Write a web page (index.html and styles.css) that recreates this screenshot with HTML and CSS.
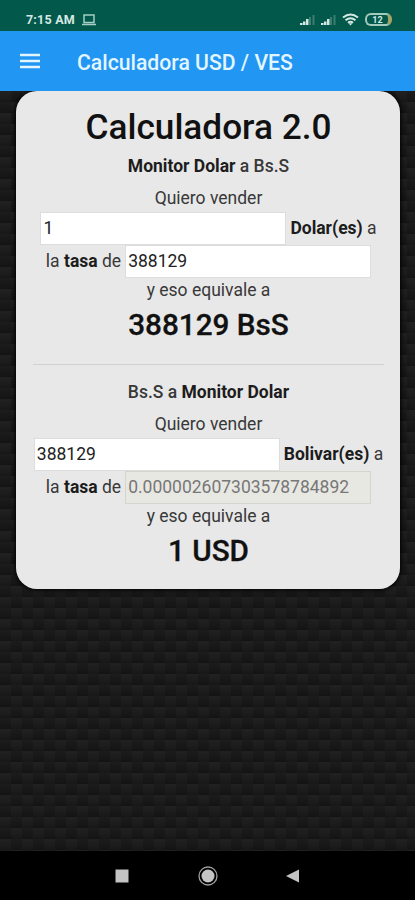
FILE: index.html
```html
<!DOCTYPE html>
<html lang="es">
<head>
    <meta charset="UTF-8">
    <meta name="viewport" content="width=device-width, initial-scale=1.0">
    <title>Calculadora USD / VES</title>
    <link rel="stylesheet" href="styles.css">
</head>
<body>
    <div class="status-bar">
        <span class="clock">7:15 AM</span>
        <svg class="laptop" width="14" height="12" viewBox="0 0 14 12">
            <path d="M2 1h10v7.500H2zM0 10.500h14" fill="none" stroke="#a5cdc3" stroke-width="1.500"/>
        </svg>
        <div class="status-icons">
            <svg width="15" height="12" viewBox="0 0 15 12">
                <path d="M0 9h2.500v2H0zM3 7.500h2.500V11H3zM6 5h2.500v6H6z" fill="#d5e8e3"/>
                <path d="M9 3h2v8H9zM12.500 1h2v10h-2z" fill="#3b7f70"/>
            </svg>
            <svg width="15" height="12" viewBox="0 0 15 12">
                <path d="M0 9h2.500v2H0zM3 7.500h2.500V11H3zM6 5h2.500v6H6z" fill="#d5e8e3"/>
                <path d="M9 3h2v8H9zM12.500 1h2v10h-2z" fill="#3b7f70"/>
            </svg>
            <svg class="wifi" width="17" height="13" viewBox="0 0 17 13">
                <path d="M1 4.500Q8.500-1.500 16 4.500M3.500 7.200Q8.500 3.200 13.500 7.200M6 9.700Q8.500 7.700 11 9.700" fill="none" stroke="#d5e8e3" stroke-width="2"/>
                <path d="M6.500 10.200h4l-2 2.300z" fill="#d5e8e3"/>
            </svg>
            <span class="battery">12</span>
        </div>
    </div>

    <header class="toolbar">
        <svg class="menu" width="20" height="16" viewBox="0 0 20 16">
            <path d="M0 2h20M0 8h20M0 14h20" stroke="#e3f5ff" stroke-width="2.400"/>
        </svg>
        <span class="toolbar-title">Calculadora USD / VES</span>
    </header>

    <main class="content">
        <div class="card">
            <h1>Calculadora 2.0</h1>

            <section>
                <h2><b>Monitor Dolar</b> a Bs.S</h2>
                <p class="label">Quiero vender</p>
                <div class="row">
                    <input type="text" value="1">
                    <span><b>Dolar(es)</b> a</span>
                </div>
                <div class="row">
                    <span>la <b>tasa</b> de</span>
                    <input type="text" value="388129">
                </div>
                <p class="equals">y eso equivale a</p>
                <h3>388129 BsS</h3>
            </section>

            <hr>

            <section>
                <h2>Bs.S a <b>Monitor Dolar</b></h2>
                <p class="label">Quiero vender</p>
                <div class="row">
                    <input type="text" value="388129">
                    <span><b>Bolivar(es)</b> a</span>
                </div>
                <div class="row">
                    <span>la <b>tasa</b> de</span>
                    <input type="text" value="0.000002607303578784892" disabled>
                </div>
                <p class="equals">y eso equivale a</p>
                <h3>1 USD</h3>
            </section>
        </div>
    </main>

    <nav class="nav-bar">
        <svg width="14" height="14" viewBox="0 0 14 14"><path d="M.5.5h13v13H.5z" fill="#c4c4c4"/></svg>
        <svg width="20" height="20" viewBox="0 0 20 20">
            <circle cx="10" cy="10" r="9" fill="none" stroke="#a0a0a0" stroke-width="1.300"/>
            <circle cx="10" cy="10" r="6.500" fill="#c4c4c4"/>
        </svg>
        <svg width="14" height="14" viewBox="0 0 14 14"><path d="M0 7L13 .5v13z" fill="#c4c4c4"/></svg>
    </nav>
</body>
</html>
```

FILE: styles.css
```css
* {
    box-sizing: border-box;
}
body {
    margin: 0;
    height: 900px;
    display: flex;
    flex-direction: column;
    font-family: Roboto, sans-serif;
    font-size: 17.5px;
    color: #383838;
    background: #000;
    overflow: hidden;
}
svg {
    display: block;
    flex: none;
}
.status-bar {
    height: 31px;
    padding: 8px 23px 0 26px;
    display: flex;
    align-items: center;
    background: #02584b;
    color: #d5e8e3;
}
.clock {
    width: 50px;
    font-size: 12.5px;
    font-weight: 700;
    line-height: 14px;
    white-space: nowrap;
    letter-spacing: .2px;
}
.laptop {
    margin-left: 6px;
}
.status-icons {
    display: flex;
    align-items: center;
    gap: 6px;
    margin-left: auto;
}
.battery {
    width: 27px;
    height: 13px;
    border: 2px solid #a4c9bd;
    border-right: 4px solid #a3a566;
    border-radius: 6px;
    font-size: 9px;
    font-weight: 700;
    line-height: 10px;
    text-align: center;
}
.toolbar {
    height: 60px;
    padding: 0 20px;
    display: flex;
    align-items: center;
    background: #2196f3;
    color: #e3f5ff;
}
.toolbar-title {
    margin-left: 37px;
    padding-top: 2px;
    font-size: 21.2px;
    font-weight: 500;
}
/* woven dark fabric */
.content {
    flex: 1;
    padding: 0 15px 0 16px;
    overflow: hidden;
    background:
        conic-gradient(rgba(0, 0, 0, .16) 25%, transparent 0 50%, rgba(0, 0, 0, .16) 0 75%, transparent 0) 0 0 / 22px 22px,
        linear-gradient(#212121, #1c1c1c 60%, #171717) 0 0 / 22px 11px;
}
.card {
    height: 498px;
    padding: 14px 16px 0 17px;
    border-radius: 21px;
    background: #e8e8e8;
    box-shadow: 0 0 4px 1px #000;
    text-align: center;
}
h1, h2, h3, p {
    margin: 0;
    white-space: nowrap;
}
h1 {
    height: 44px;
    font-size: 35.2px;
    font-weight: 500;
    line-height: 44px;
    color: #111;
}
h2 {
    height: 34px;
    font-size: 17.5px;
    font-weight: 500;
    line-height: 35px;
}
b {
    font-weight: 700;
    color: #1c1c1c;
}
.label {
    height: 29px;
    line-height: 30px;
}
.row {
    height: 33px;
    display: flex;
    justify-content: center;
    align-items: center;
    gap: 4px;
    white-space: nowrap;
}
.row span {
    line-height: 20px;
    padding-bottom: 2px;
}
input {
    width: 246px;
    height: 33px;
    padding: 0 2px 2px;
    border: 1px solid #ddd;
    border-radius: 0;
    background: #fff;
    color: #222;
    font-family: inherit;
    font-size: 17.5px;
}
input:disabled {
    border-color: #d5d5cc;
    background: #e8e8e3;
    color: #777;
}
.equals {
    height: 24px;
    line-height: 24px;
}
h3 {
    height: 47px;
    font-size: 29.7px;
    font-weight: 500;
    line-height: 46px;
    color: #111;
    -webkit-text-stroke: .3px #111;
}
hr {
    height: 1px;
    margin: 15px 0 10px;
    border: 0;
    background: #d1d1d1;
}
.nav-bar {
    height: 49px;
    padding: 0 115px;
    display: flex;
    justify-content: space-between;
    align-items: center;
    background: #000;
}
```
